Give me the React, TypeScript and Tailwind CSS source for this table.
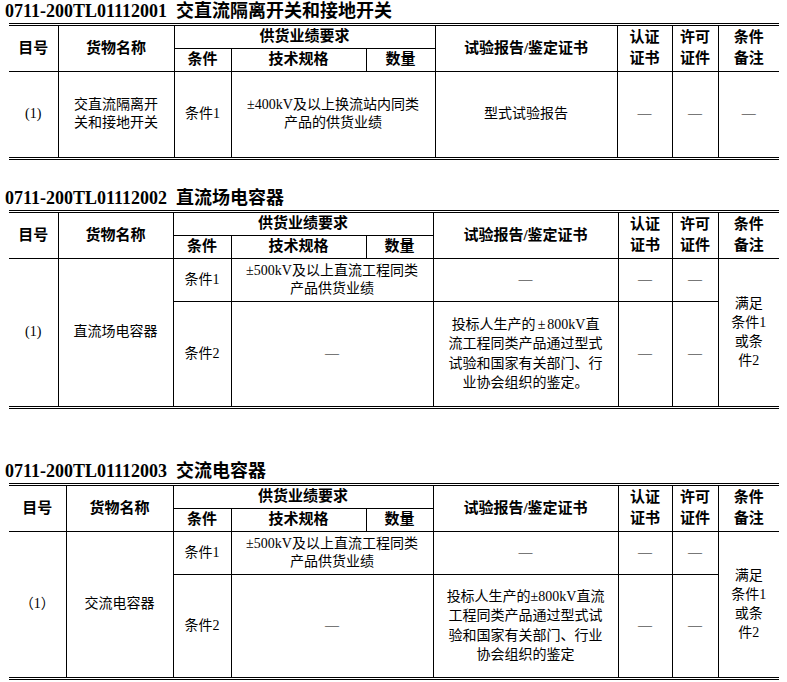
import React from "react"

const cell = "border border-black p-0 text-center align-middle"
const th = `${cell} font-bold text-[15px] leading-[21px]`
const td = `${cell} font-normal text-[14px] leading-[18px]`

function Head() {
  return (
    <thead>
      <tr className="h-[22px]">
        <th rowSpan={2} className={th}>目号</th>
        <th rowSpan={2} className={th}>货物名称</th>
        <th colSpan={3} className={th}>供货业绩要求</th>
        <th rowSpan={2} className={th}>试验报告/鉴定证书</th>
        <th rowSpan={2} className={th}>认证<br />证书</th>
        <th rowSpan={2} className={th}>许可<br />证件</th>
        <th rowSpan={2} className={th}>条件<br />备注</th>
      </tr>
      <tr className="h-[23px]">
        <th className={th}>条件</th>
        <th className={th}>技术规格</th>
        <th className={th}>数量</th>
      </tr>
    </thead>
  )
}

function Section({ title, code, cols, className, children }: { title: string; code: string; cols: number[]; className?: string; children: React.ReactNode }) {
  return (
    <section className={className}>
      <h2 className="h-[23px] pl-[5px] text-[18px] leading-[23px] font-bold whitespace-nowrap">
        {code}&nbsp;&nbsp;{title}
      </h2>
      <div className="ml-[9px] w-[770px] border-y-[3px] border-double border-black">
        <table className="w-full table-fixed border-collapse border-hidden">
          <colgroup>
            {cols.map((w, i) => (
              <col key={i} style={{ width: w }} />
            ))}
          </colgroup>
          <Head />
          <tbody>{children}</tbody>
        </table>
      </div>
    </section>
  )
}

export default function App() {
  return (
    <div className="w-[787px] h-[682px] overflow-hidden bg-white text-black font-['Liberation_Serif','Noto_Sans_CJK_SC',serif]">
      <Section code="0711-200TL01112001" title="交直流隔离开关和接地开关" cols={[49, 116, 57, 135, 69, 182, 55, 46, 61]}>
        <tr className="h-[86px]">
          <td className={td}>(1)</td>
          <td className={td}>交直流隔离开<br />关和接地开关</td>
          <td className={td}>条件1</td>
          <td colSpan={2} className={td}>±400kV及以上换流站内同类<br />产品的供货业绩</td>
          <td className={td}>型式试验报告</td>
          <td className={td}>—</td>
          <td className={td}>—</td>
          <td className={td}>—</td>
        </tr>
      </Section>

      <Section className="mt-[27px]" code="0711-200TL01112002" title="直流场电容器" cols={[49, 115, 58, 135, 67, 185, 54, 46, 61]}>
        <tr className="h-[43px]">
          <td rowSpan={2} className={td}>(1)</td>
          <td rowSpan={2} className={td}>直流场电容器</td>
          <td className={td}>条件1</td>
          <td colSpan={2} className={td}>±500kV及以上直流工程同类<br />产品供货业绩</td>
          <td className={td}>—</td>
          <td className={td}>—</td>
          <td className={td}>—</td>
          <td rowSpan={2} className={`${td} leading-[19px]`}>满足<br />条件1<br />或条<br />件2</td>
        </tr>
        <tr className="h-[105px]">
          <td className={td}>条件2</td>
          <td colSpan={2} className={td}>—</td>
          <td className={`${td} leading-[19.5px]`}>投标人生产的<span className="px-[2px]">±</span>800kV直<br />流工程同类产品通过型式<br />试验和国家有关部门、行<br />业协会组织的鉴定。</td>
          <td className={td}>—</td>
          <td className={td}>—</td>
        </tr>
      </Section>

      <Section className="mt-[51px]" code="0711-200TL01112003" title="交流电容器" cols={[57, 107, 58, 135, 67, 185, 54, 46, 61]}>
        <tr className="h-[43px]">
          <td rowSpan={2} className={td}>（1）</td>
          <td rowSpan={2} className={td}>交流电容器</td>
          <td className={td}>条件1</td>
          <td colSpan={2} className={td}>±500kV及以上直流工程同类<br />产品供货业绩</td>
          <td className={td}>—</td>
          <td className={td}>—</td>
          <td className={td}>—</td>
          <td rowSpan={2} className={`${td} leading-[19px]`}>满足<br />条件1<br />或条<br />件2</td>
        </tr>
        <tr className="h-[103px]">
          <td className={td}>条件2</td>
          <td colSpan={2} className={td}>—</td>
          <td className={`${td} leading-[19.5px]`}>投标人生产的±800kV直流<br />工程同类产品通过型式试<br />验和国家有关部门、行业<br />协会组织的鉴定</td>
          <td className={td}>—</td>
          <td className={td}>—</td>
        </tr>
      </Section>
    </div>
  )
}
